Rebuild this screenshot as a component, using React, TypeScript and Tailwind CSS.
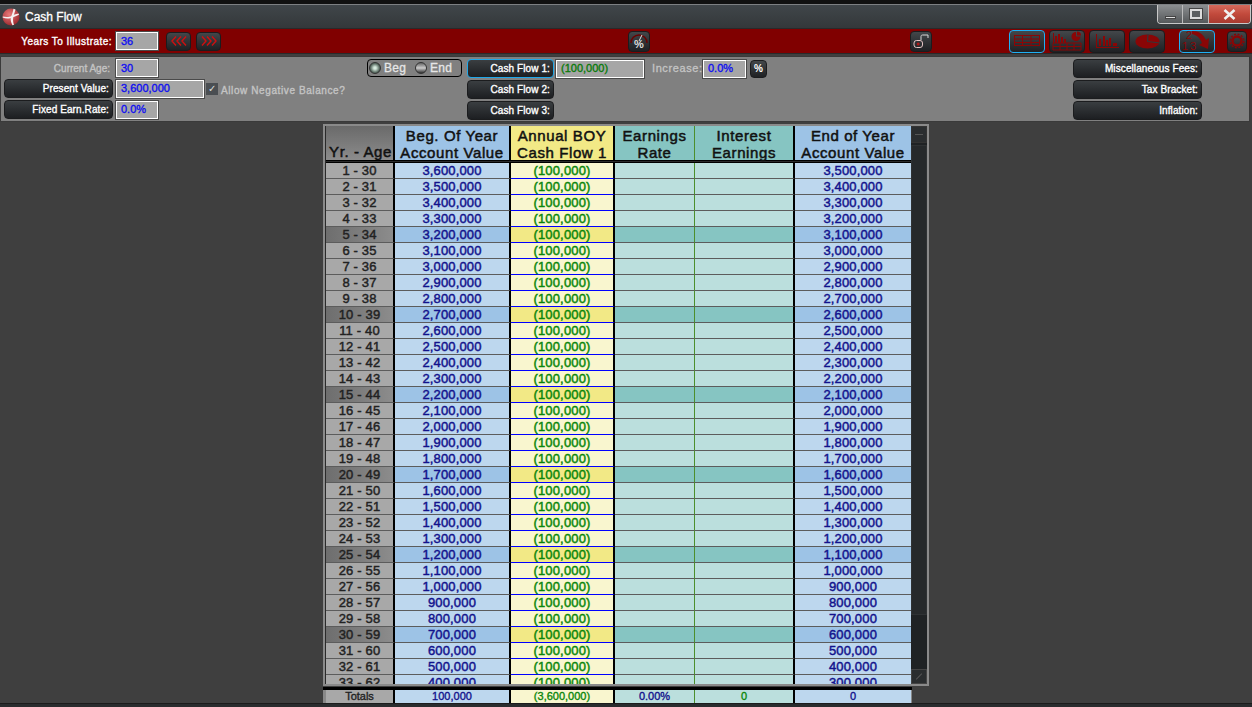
import type { ReactNode } from 'react'

const FONT = "font-['Liberation_Sans',Arial,sans-serif]"
const BTN = 'flex items-center justify-center rounded-[4px] bg-gradient-to-b from-[#43474a] to-[#1f2124] border border-[#1b1c1e]'
const LABEL_BTN = 'flex h-[19px] items-center justify-end rounded-[4px] bg-gradient-to-b from-[#3a3e41] via-[#2b2e31] to-[#1d1f22] border border-[#1b1c1e] pr-[3px] text-[10px] [-webkit-text-stroke:0.35px] tracking-[0.1px] text-white'
const INPUT = 'flex h-[18px] items-center border border-white outline outline-1 outline-[#4a4a4a] bg-[#a6a6a6] pl-[4px] text-[11px] [-webkit-text-stroke:0.35px]'
const CAPTION = 'text-[10px] [-webkit-text-stroke:0.35px]'

// only the rows that fit in the visible part of the grid
const YEARS = Array.from({ length: 33 }, (_, i) => i + 1)
const fmt = (n: number) => n.toLocaleString('en-US')

const Input = ({ w, value, color = 'text-[#1010f0]' }: { w: string; value: string; color?: string }) => (
  <div className={`${INPUT} ${w} ${color}`}>{value}</div>
)

const LabelBtn = ({ w, children, active }: { w: string; children: ReactNode; active?: boolean }) => (
  <div className={`${LABEL_BTN} ${w} ${active ? 'border-[#1fa7e8]' : ''}`}>{children}</div>
)

const IconBtn = ({ w, active, children }: { w: string; active?: boolean; children: ReactNode }) => (
  <div className={`${BTN} ${w} h-[23px] ${active ? 'border-[#1fb0f5]' : ''}`}>{children}</div>
)

const RED = '#8a0606'

const TableIcon = () => (
  <svg width="26" height="12" viewBox="0 0 26 12" fill="none" stroke={RED} strokeWidth="1">
    <rect x="0.5" y="0.5" width="25" height="10" />
    <path d="M0 4h26M0 7.5h26M8.5 0v11M17 0v11" />
  </svg>
)

const BarsIcon = () => (
  <svg width="24" height="16" viewBox="0 0 24 16" fill={RED}>
    <path d="M1 1h1v13h22v1H1z" />
    <rect x="4" y="6" width="2" height="7" />
    <rect x="8" y="3" width="2" height="10" />
    <rect x="11" y="7" width="2" height="6" />
    <rect x="14" y="5" width="2" height="8" />
    <rect x="18" y="10" width="4" height="3" />
  </svg>
)

const PieIcon = () => (
  <svg width="25" height="15" viewBox="0 0 25 15">
    <ellipse cx="12.5" cy="7.5" rx="12" ry="7" fill={RED} />
    <path d="M12.5 7.5L13 0M12.5 7.5L25 9" stroke="#34373a" strokeWidth="1.2" fill="none" />
  </svg>
)

const ComboIcon = () => (
  <svg width="30" height="20" viewBox="0 0 30 20" fill={RED}>
    <rect x="1" y="2" width="1" height="10" />
    <rect x="3" y="5" width="2" height="7" />
    <rect x="6" y="3" width="2" height="9" />
    <rect x="9" y="6" width="2" height="6" />
    <rect x="12" y="8" width="2" height="4" />
    <path d="M24 1a4.5 4.5 0 1 0 4.5 4.5H24z" />
    <path d="M25 0.5a4 4 0 0 1 4 4h-4z" />
    <path d="M1 12h28v7H1z" fill="none" stroke={RED} />
    <path d="M1 15.5h28M8 12v7M15 12v7M22 12v7" stroke={RED} />
  </svg>
)

const ArrowIcon = () => (
  <svg width="32" height="22" viewBox="0 0 32 22" fill={RED} fontFamily="Liberation Sans" fontSize="11">
    <text x="5" y="9">2</text>
    <text x="1" y="20">1</text>
    <text x="9" y="20">3</text>
    <path d="M11 1c7 0 11 3 14 9l3-2-1 11-9-4 3-2c-2-5-5-8-10-9z" />
  </svg>
)

const GearIcon = () => (
  <svg width="16" height="16" viewBox="0 0 16 16" fill="none" stroke={RED}>
    <circle cx="8" cy="8" r="4.5" strokeWidth="2.5" />
    <circle cx="8" cy="8" r="6.8" strokeWidth="1.4" strokeDasharray="2 1.6" />
  </svg>
)

const LockIcon = () => (
  <svg width="18" height="16" viewBox="0 0 18 16" fill="none">
    <path d="M9 7V3.5C9 2.5 9.6 2 10.5 2H16V5" stroke="#d8d8d8" />
    <rect x="2" y="7.5" width="8.5" height="7" rx="2.5" stroke="#e4c4c4" />
    <circle cx="6.2" cy="11" r="1.5" fill="#b01818" />
  </svg>
)

const PercentGauge = () => (
  <svg width="20" height="18" viewBox="0 0 20 18" fill="none">
    <path d="M2 11A8 8 0 0 1 18 11" stroke="#6a0000" strokeWidth="1.5" />
    <path d="M10 9l3-6" stroke="#e0e0e0" />
    <text x="10" y="16" textAnchor="middle" fontSize="11" fontWeight="700" fill="#ddd" fontFamily="Liberation Sans">%</text>
  </svg>
)

const Chevrons = ({ dir }: { dir: 'l' | 'r' }) => (
  <svg width="16" height="10" viewBox="0 0 16 10" fill="none" stroke="#d01010" strokeWidth="1.4">
    {dir === 'l'
      ? <path d="M5 0.5L1 5l4 4.5M10 0.5L6 5l4 4.5M15 0.5L11 5l4 4.5" />
      : <path d="M1 0.5L5 5 1 9.5M6 0.5L10 5 6 9.5M11 0.5L15 5l-4 4.5" />}
  </svg>
)

const Logo = () => (
  <svg width="18" height="18" viewBox="0 0 18 18">
    <defs>
      <radialGradient id="ball" cx="0.4" cy="0.35" r="0.8">
        <stop offset="0" stopColor="#e87a7a" />
        <stop offset="1" stopColor="#8c1a20" />
      </radialGradient>
    </defs>
    <circle cx="9" cy="9" r="8.5" fill="url(#ball)" />
    <path d="M0.8 8.5c4 1 7 .3 8.5-.6C10.5 5.5 11 3 11.5 0.8l2 .8c-.6 2-1.2 4-1.7 5.2l4.7-1.3.5 1.3-5.8 2.4c-.3 2.5-.2 5 .8 7.5l-1.5.5c-1.5-2.5-2-5-1.8-7.2-2.5 .8-5.5 .7-8-.5z" fill="#f4f0f0" />
  </svg>
)

const WindowButtons = () => (
  <div className="flex h-[19px] self-start overflow-hidden rounded-b-[4px] border border-t-0 border-[#c8c8c8]">
    <div className="flex w-[25px] items-end justify-center border-r border-[#bbb] bg-gradient-to-b from-[#8c8f91] to-[#56595b] pb-[4px]">
      <div className="h-[3px] w-[11px] border border-[#444] bg-[#ddd]" />
    </div>
    <div className="flex w-[26px] items-center justify-center border-r border-[#bbb] bg-gradient-to-b from-[#8c8f91] to-[#56595b]">
      <div className="h-[10px] w-[12px] border-2 border-[#dcdcdc] bg-[#5c5f61] outline outline-1 outline-[#444]" />
    </div>
    <div className="flex w-[41px] items-center justify-center bg-gradient-to-b from-[#d66a5c] via-[#c24a3c] to-[#a83a30]">
      <svg width="13" height="11" viewBox="0 0 13 11" stroke="#f0f0f0" strokeWidth="2.6">
        <path d="M1.5 1l10 9M11.5 1l-10 9" />
      </svg>
    </div>
  </div>
)

const Radio = ({ on, label }: { on: boolean; label: string }) => (
  <div className="flex w-[47px] items-center gap-[3px]">
    <div className={`h-[12px] w-[12px] rounded-full border border-[#333] ${on ? 'bg-[radial-gradient(circle,#d8ece0_15%,#5f7268_60%,#2c3a34)]' : 'bg-gradient-to-b from-[#666] via-[#ccc] to-[#333]'}`} />
    <span className="text-[12px] tracking-[0.3px] text-[#e6e6e6] [-webkit-text-stroke:0.3px]">{label}</span>
  </div>
)

const Header = () => (
  <div className="flex h-[37px] border-b-[3px] border-double border-[#000] text-center text-[15px] [-webkit-text-stroke:0.5px] leading-[17px] tracking-[0.6px] text-[#111]">
    <div className="flex w-[69px] items-end justify-end whitespace-nowrap border-r-2 border-black bg-gradient-to-b from-[#6a6a6a] to-[#8c8c8c] pr-[1px]">Yr. - Age</div>
    <div className="w-[116px] border-r-2 border-black bg-[#9dc3e6] pt-[1px]">Beg. Of Year<br />Account Value</div>
    <div className="w-[104px] border-r-2 border-black bg-[#f2e986] pt-[1px]">Annual BOY<br />Cash Flow 1</div>
    <div className="w-[80px] border-r border-[#4c8f2c] bg-[#86c5c2] pt-[1px]">Earnings<br />Rate</div>
    <div className="w-[100px] border-r-2 border-black bg-[#86c5c2] pt-[1px]">Interest<br />Earnings</div>
    <div className="w-[116px] bg-[#9dc3e6] pt-[1px]">End of Year<br />Account Value</div>
  </div>
)

const Row = ({ year }: { year: number }) => {
  const dark = year % 5 === 0
  const begin = 3700000 - year * 100000
  return (
    <div className="flex h-[16px] text-center text-[13px] [-webkit-text-stroke:0.45px] leading-[15px] tracking-[0.15px]">
      <div className={`w-[69px] border-r-2 border-b border-r-black border-b-[#5c5c5c] text-[#222] ${dark ? 'bg-gradient-to-r from-[#6e6e6e] to-[#8c8c8c]' : 'bg-[#a8a8a8]'}`}>{year} - {year + 29}</div>
      <div className={`w-[116px] border-r-2 border-b border-r-black border-b-[#5c5c5c] text-[#12128c] ${dark ? 'bg-[#9dc3e6]' : 'bg-[#bdd7ee]'}`}>{fmt(begin)}</div>
      <div className={`w-[104px] border-r-2 border-b border-r-black border-b-[#0000ff] text-[#0a860a] ${dark ? 'bg-[#f2e986]' : 'bg-[#f9f6cf]'}`}>(100,000)</div>
      <div className={`w-[80px] border-r border-b border-r-[#4c8f2c] border-b-[#5c5c5c] ${dark ? 'bg-[#86c5c2]' : 'bg-[#bbdfdd]'}`} />
      <div className={`w-[100px] border-r-2 border-b border-r-black border-b-[#5c5c5c] ${dark ? 'bg-[#86c5c2]' : 'bg-[#bbdfdd]'}`} />
      <div className={`w-[116px] border-b border-b-[#5c5c5c] text-[#12128c] ${dark ? 'bg-[#9dc3e6]' : 'bg-[#bdd7ee]'}`}>{fmt(begin - 100000)}</div>
    </div>
  )
}

const Scrollbar = () => (
  <div className="flex w-[16px] flex-col bg-[#1f2224]">
    <div className="flex h-[17px] items-center justify-center border border-[#333] bg-[#2a2d2f]">
      <div className="h-[1px] w-[8px] bg-[#555]" />
    </div>
    <div className="my-[2px] h-[470px] border border-[#2f3234] bg-[#26292b]" />
    <div className="mt-auto flex h-[15px] items-center justify-center border border-[#444] bg-[#2a2d2f]">
      <div className="h-[1px] w-[8px] -rotate-45 bg-[#555]" />
    </div>
  </div>
)

const Totals = () => (
  <div className="ml-[323px] mt-[1px] flex h-[16px] w-[589px] border-t-[3px] border-t-black bg-[#888] pl-[3px] text-center text-[11px] [-webkit-text-stroke:0.35px] leading-[13px]">
    <div className="w-[69px] border-r-2 border-black bg-[#a8a8a8] text-[#222]">Totals</div>
    <div className="w-[116px] border-r-2 border-black bg-[#bdd7ee] text-[#12128c]">100,000</div>
    <div className="w-[104px] border-r-2 border-black bg-[#f9f6cf] text-[#0a860a]">(3,600,000)</div>
    <div className="w-[80px] border-r border-[#4c8f2c] bg-[#bbdfdd] text-[#12128c]">0.00%</div>
    <div className="w-[100px] border-r-2 border-black bg-[#bbdfdd] text-[#0a860a]">0</div>
    <div className="w-[116px] bg-[#bdd7ee] text-[#12128c]">0</div>
  </div>
)

export default function App() {
  return (
    <div className={`${FONT} flex h-[707px] w-[1252px] flex-col overflow-hidden bg-[#3f3f3f]`}>
      {/* window strip behind the title */}
      <div className="h-[4px] bg-[#111]" />

      <div className="flex h-[24px] items-center justify-between border-t border-[#7d8083] bg-gradient-to-b from-[#40464a] to-[#34383a] pl-[2px] pr-px">
        <div className="flex items-center gap-[5px]">
          <Logo />
          <span className="text-[12px] text-white [-webkit-text-stroke:0.3px]">Cash Flow</span>
        </div>
        <WindowButtons />
      </div>

      <div className="flex h-[26px] items-center border-y border-[#2a2a2a] bg-[#800000] text-white">
        <span className={`${CAPTION} w-[112px] text-right tracking-[0.45px]`}>Years To Illustrate:</span>
        <Input w="ml-[4px] w-[42px]" value="36" />
        <div className={`${BTN} ml-[8px] h-[19px] w-[25px]`}><Chevrons dir="l" /></div>
        <div className={`${BTN} ml-[5px] h-[19px] w-[25px]`}><Chevrons dir="r" /></div>
        <div className={`${BTN} ml-[407px] h-[21px] w-[22px]`}><PercentGauge /></div>
        <div className={`${BTN} ml-[260px] h-[21px] w-[22px]`}><LockIcon /></div>
        <div className="ml-[77px] flex gap-[4px]">
          <IconBtn w="w-[36px]" active><TableIcon /></IconBtn>
          <IconBtn w="w-[36px]"><ComboIcon /></IconBtn>
          <IconBtn w="w-[36px]"><BarsIcon /></IconBtn>
          <IconBtn w="w-[36px]"><PieIcon /></IconBtn>
        </div>
        <IconBtn w="ml-[14px] w-[36px]" active><ArrowIcon /></IconBtn>
        <div className={`${BTN} ml-[12px] h-[21px] w-[20px]`}><GearIcon /></div>
      </div>

      <div className="mt-[2px] mr-[2px] flex h-[66px] border border-[#3a3a3a] bg-[#808080] pl-[3px] pt-[2px]">
        <div className="flex w-[363px] flex-col gap-[2px]">
          <div className="flex items-center">
            <span className={`${CAPTION} w-[109px] pr-[3px] text-right text-[#c4c4c4]`}>Current Age:</span>
            <Input w="ml-[3px] w-[42px]" value="30" />
          </div>
          <div className="flex items-center">
            <LabelBtn w="w-[109px]">Present Value:</LabelBtn>
            <Input w="ml-[3px] w-[88px]" value="3,600,000" />
            <div className="ml-[2px] flex h-[12px] w-[12px] items-center justify-center bg-[#4a4e52] text-[10px] leading-none text-[#ddd]">✓</div>
            <span className={`${CAPTION} ml-[3px] pt-[3px] tracking-[0.6px] text-[#c4c4c4]`}>Allow Negative Balance?</span>
          </div>
          <div className="flex items-center">
            <LabelBtn w="w-[109px]">Fixed Earn.Rate:</LabelBtn>
            <Input w="ml-[3px] w-[42px]" value="0.0%" />
          </div>
        </div>

        <div className="w-[100px]">
          <div className="flex h-[18px] w-[95px] items-center rounded-[4px] border border-black pl-[1px]">
            <Radio on label="Beg" />
            <Radio on={false} label="End" />
          </div>
        </div>

        <div className="flex w-[606px] flex-col gap-[2px]">
          <div className="flex items-center">
            <LabelBtn w="w-[87px]" active>Cash Flow 1:</LabelBtn>
            <Input w="ml-[2px] w-[88px]" value="(100,000)" color="text-[#0a7a0a]" />
            <span className="ml-[8px] w-[51px] text-[11px] tracking-[0.6px] text-[#c4c4c4] [-webkit-text-stroke:0.3px]">Increase:</span>
            <Input w="w-[43px]" value="0.0%" />
            <div className={`${BTN} ml-[4px] h-[18px] w-[17px] text-[10px] font-bold text-white`}>%</div>
          </div>
          <LabelBtn w="w-[87px]">Cash Flow 2:</LabelBtn>
          <LabelBtn w="w-[87px]">Cash Flow 3:</LabelBtn>
        </div>

        <div className="flex w-[129px] flex-col gap-[2px]">
          <LabelBtn w="w-[129px]">Miscellaneous Fees:</LabelBtn>
          <LabelBtn w="w-[129px]">Tax Bracket:</LabelBtn>
          <LabelBtn w="w-[129px]">Inflation:</LabelBtn>
        </div>
      </div>

      <div className="mx-auto mt-[2px] flex h-[562px] w-[606px] border-2 border-[#8a8a8a] bg-[#2a2a2a]">
        <div className="flex flex-1 flex-col overflow-hidden pl-px">
          <Header />
          <div className="flex-1 overflow-hidden">
            {YEARS.map((y) => <Row key={y} year={y} />)}
          </div>
        </div>
        <Scrollbar />
      </div>

      <Totals />
      <div className="flex-1 border-t border-[#1c1c1c] bg-[#2a2c2e]" />
    </div>
  )
}
